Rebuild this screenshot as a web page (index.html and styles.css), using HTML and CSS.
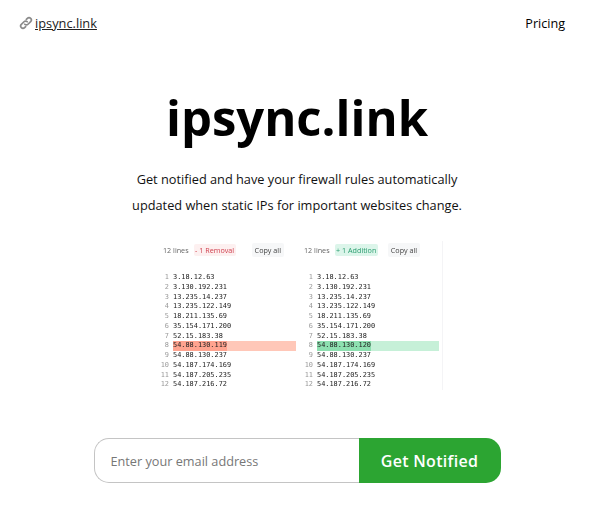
FILE: index.html
```html
<!DOCTYPE html>
<html lang="en">
<head>
<meta charset="utf-8">
<title>ipsync.link</title>
<link rel="stylesheet" href="styles.css">
</head>
<body>
<header class="top">
  <div class="brand">
    <svg class="link-icon" viewBox="0 0 16 16" width="14" height="14" fill="none" stroke="#8a8a8a" stroke-width="1.9" stroke-linecap="round">
      <path d="M6.6 9.4a2.6 2.6 0 0 0 3.7 0l3-3a2.6 2.6 0 0 0-3.7-3.7L8.4 3.9"/>
      <path d="M9.4 6.6a2.6 2.6 0 0 0-3.7 0l-3 3a2.6 2.6 0 0 0 3.7 3.7l1.2-1.2"/>
    </svg>
    <a class="brand-link" href="#">ipsync.link</a>
  </div>
  <a class="pricing" href="#">Pricing</a>
</header>
<main class="main">
  <h1 class="title">ipsync.link</h1>
  <p class="lead">Get notified and have your firewall rules automatically<br>updated when static IPs for important websites change.</p>
  <div class="diffs">
    <section class="diff">
      <div class="diff-head">
        <span class="count">12 lines</span>
        <span class="badge removal">- 1 Removal</span>
        <span class="copy">Copy all</span>
      </div>
      <ol class="lines">
        <li><i>1</i>3.18.12.63</li>
        <li><i>2</i>3.130.192.231</li>
        <li><i>3</i>13.235.14.237</li>
        <li><i>4</i>13.235.122.149</li>
        <li><i>5</i>18.211.135.69</li>
        <li><i>6</i>35.154.171.200</li>
        <li><i>7</i>52.15.183.38</li>
        <li class="hl-red"><i>8</i><b>54.88.130.119</b></li>
        <li><i>9</i>54.88.130.237</li>
        <li><i>10</i>54.187.174.169</li>
        <li><i>11</i>54.187.205.235</li>
        <li><i>12</i>54.187.216.72</li>
      </ol>
    </section>
    <section class="diff diff-right">
      <div class="diff-head">
        <span class="count">12 lines</span>
        <span class="badge addition">+ 1 Addition</span>
        <span class="copy">Copy all</span>
      </div>
      <ol class="lines">
        <li><i>1</i>3.18.12.63</li>
        <li><i>2</i>3.130.192.231</li>
        <li><i>3</i>13.235.14.237</li>
        <li><i>4</i>13.235.122.149</li>
        <li><i>5</i>18.211.135.69</li>
        <li><i>6</i>35.154.171.200</li>
        <li><i>7</i>52.15.183.38</li>
        <li class="hl-green"><i>8</i><b>54.88.130.120</b></li>
        <li><i>9</i>54.88.130.237</li>
        <li><i>10</i>54.187.174.169</li>
        <li><i>11</i>54.187.205.235</li>
        <li><i>12</i>54.187.216.72</li>
      </ol>
    </section>
  </div>
  <form class="signup">
    <input class="email" type="email" placeholder="Enter your email address">
    <button class="submit" type="button">Get Notified</button>
  </form>
</main>
</body>
</html>
```
FILE: styles.css
```css
* { box-sizing: border-box; }
html, body { margin: 0; padding: 0; background: #fff; }
body {
  font-family: "Open Sans", "Noto Sans", sans-serif;
  color: #111;
  height: 527px;
  overflow: hidden;
}
.top {
  display: flex;
  justify-content: space-between;
  align-items: center;
  padding: 8px 35px 0 19px;
  height: 38px;
  font-size: 12.8px;
}
.brand { display: flex; align-items: center; gap: 2px; }
.link-icon { display: block; }
.brand-link { color: #222; text-decoration: underline; }
.pricing { color: #000; text-decoration: none; font-weight: 500; font-size: 12.6px; margin-top: 1px; }
.main { display: flex; flex-direction: column; align-items: center; padding-right: 6px; }
.title {
  margin: 41px 0 0;
  font-size: 49px;
  line-height: 76px;
  font-weight: 700;
  color: #000;
}
.lead {
  margin: 11px 0 0;
  font-size: 12.75px;
  line-height: 26px;
  text-align: center;
  color: #111;
}
.diffs {
  margin-top: 23px;
  margin-left: 6px;
  display: flex;
  width: 286px;
  padding-left: 3px;
  gap: 8px;
  font-family: "Open Sans", sans-serif;
  filter: blur(0.35px);
}
.diff { width: 136px; }
.diff-right { width: 139px; border-right: 1px solid #f4f4f6; padding-right: 3px; }
.diff-head {
  display: flex;
  align-items: center;
  height: 18px;
  font-size: 7.2px;
  color: #666;
  padding-left: 3px;
}
.diff-right .diff-head { padding-left: 0; }
.count { margin-right: 5px; }
.badge { padding: 0 1.5px; line-height: 12px; border-radius: 2px; }
.removal { background: #fdf0f0; color: #d0414f; }
.addition { background: #dcf5ea; color: #2a9d6f; }
.copy { background: #f6f7f8; color: #444; padding: 0 3px; line-height: 14px; border-radius: 2px; margin-left: 16px; }
.diff-right .copy { margin-left: 10px; }
.lines {
  list-style: none;
  margin: 14px 0 0;
  padding: 0;
  font-family: "DejaVu Sans Mono", monospace;
  font-size: 6.9px;
  color: #222;
}
.lines li { display: flex; height: 9.75px; line-height: 9.75px; white-space: nowrap; }
.lines i { font-style: normal; width: 13px; text-align: right; padding-right: 4px; color: #999; flex: none; }
.lines b { font-weight: 400; display: block; }
.hl-red { background: #ffc7b8; margin-left: 13px; }
.hl-red i, .hl-green i { margin-left: -13px; background: #fff; }
.hl-red b { background: #ffa38f; }
.hl-green { background: #c6f0d8; margin-left: 13px; }
.hl-green b { background: #8de0b0; }
.signup {
  margin-top: 48px;
  display: flex;
  width: 407px;
  height: 45px;
}
.email {
  flex: 1;
  min-width: 0;
  height: 100%;
  border: 1px solid #c4c4c4;
  border-right: 0;
  border-radius: 15px 0 0 15px;
  padding: 0 16px;
  font: 12.7px "Open Sans", sans-serif;
  background: #fff;
  outline: none;
}
.email::placeholder { color: #777; opacity: 1; }
.submit {
  width: 142px;
  height: 100%;
  border: 0;
  border-radius: 0 15px 15px 0;
  background: #2ca532;
  color: #fff;
  font: 600 16px "Open Sans", sans-serif;
  letter-spacing: 0.3px;
  padding: 0;
}
```
